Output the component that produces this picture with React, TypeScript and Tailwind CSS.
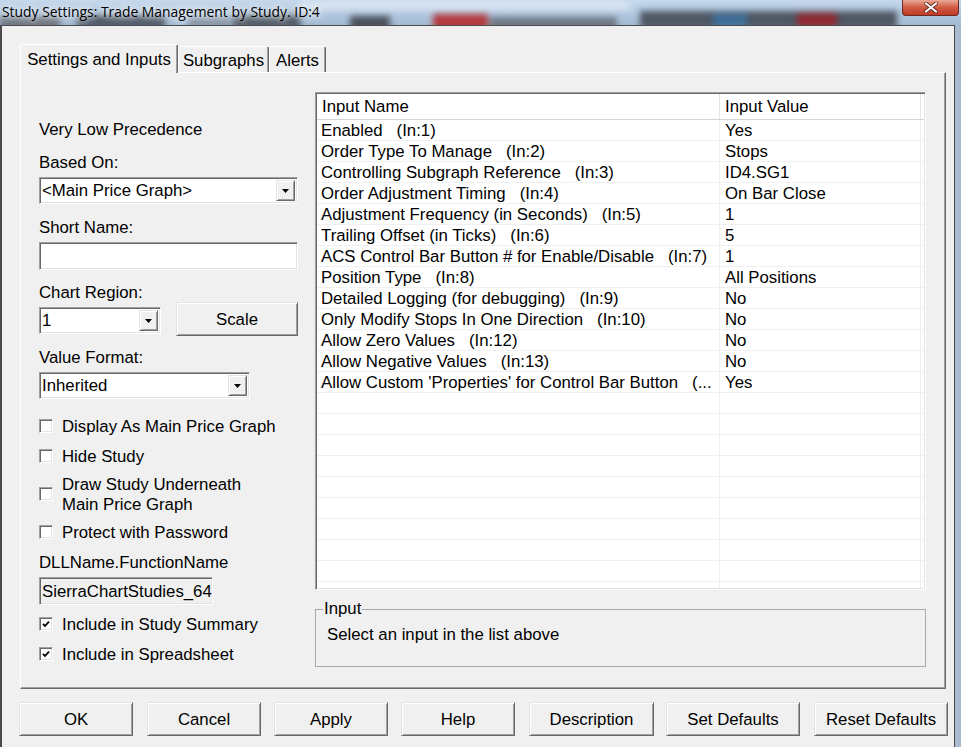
import React from "react";

// classic 3D edges
const raised =
  "border border-t-[#e3e3e3] border-l-[#e3e3e3] border-b-[#696969] border-r-[#696969] shadow-[inset_1px_1px_0_#ffffff,inset_-1px_-1px_0_#a0a0a0]";
const sunken =
  "border border-t-[#a0a0a0] border-l-[#a0a0a0] border-b-white border-r-white shadow-[inset_1px_1px_0_#696969,inset_-1px_-1px_0_#e3e3e3]";

const inputs: [string, string][] = [
  ["Enabled   (In:1)", "Yes"],
  ["Order Type To Manage   (In:2)", "Stops"],
  ["Controlling Subgraph Reference   (In:3)", "ID4.SG1"],
  ["Order Adjustment Timing   (In:4)", "On Bar Close"],
  ["Adjustment Frequency (in Seconds)   (In:5)", "1"],
  ["Trailing Offset (in Ticks)   (In:6)", "5"],
  ["ACS Control Bar Button # for Enable/Disable   (In:7)", "1"],
  ["Position Type   (In:8)", "All Positions"],
  ["Detailed Logging (for debugging)   (In:9)", "No"],
  ["Only Modify Stops In One Direction   (In:10)", "No"],
  ["Allow Zero Values   (In:12)", "No"],
  ["Allow Negative Values   (In:13)", "No"],
  ["Allow Custom 'Properties' for Control Bar Button   (...", "Yes"],
];

const buttons: { label: string; w: string; ml: string }[] = [
  { label: "OK", w: "w-[114px]", ml: "ml-[17px]" },
  { label: "Cancel", w: "w-[114px]", ml: "ml-[14px]" },
  { label: "Apply", w: "w-[114px]", ml: "ml-[13px]" },
  { label: "Help", w: "w-[114px]", ml: "ml-[13px]" },
  { label: "Description", w: "w-[125px]", ml: "ml-[14px]" },
  { label: "Set Defaults", w: "w-[134px]", ml: "ml-[12px]" },
  { label: "Reset Defaults", w: "w-[134px]", ml: "ml-[14px]" },
];

function Arrow() {
  return (
    <svg width="7" height="4" viewBox="0 0 7 4">
      <path d="M0 0h7L3.5 4z" fill="#000" />
    </svg>
  );
}

function Label({ className = "", children }: { className?: string; children: React.ReactNode }) {
  return <div className={`h-[20px] leading-[22px] ${className}`}>{children}</div>;
}

function Combo({ value, w }: { value: string; w: string }) {
  return (
    <div className={`${w} h-[27px] ${sunken} bg-white flex items-center pl-[2px] pr-[2px]`}>
      <span className="flex-1 whitespace-nowrap leading-[22px]">{value}</span>
      <span className={`w-[19px] h-[21px] ${raised} bg-[#f0f0f0] flex items-center justify-center`}>
        <Arrow />
      </span>
    </div>
  );
}

function Check({ checked, tall, children }: { checked?: boolean; tall?: boolean; children: React.ReactNode }) {
  return (
    <div className={`flex items-center ${tall ? "h-[40px]" : "h-[20px]"}`}>
      <span className={`w-[14px] h-[14px] shrink-0 ${sunken} bg-white flex items-center justify-center`}>
        {checked && (
          <svg width="10" height="10" viewBox="0 0 10 10">
            <path d="M2 4.8 L4 7 L8 2.6" stroke="#000" strokeWidth="1.8" fill="none" />
          </svg>
        )}
      </span>
      <span className="ml-[9px] pt-[2px]">{children}</span>
    </div>
  );
}

export default function App() {
  return (
    <div className="w-[961px] h-[747px] overflow-hidden bg-[#a9bccf] font-['Liberation_Sans',Arial,sans-serif] text-[16.8px] leading-[20px] text-black">
      {/* ===== Aero title bar ===== */}
      <div className="relative h-[25px] flex items-start overflow-hidden bg-gradient-to-b from-[#c6d8ec] via-[#b3c9e0] to-[#a3bad3]">
        <div className="absolute inset-0 blur-[3px]">
          <div className="absolute left-[0px] top-[16px] w-[60px] h-[14px] bg-[#6e7682]" />
          <div className="absolute left-[77px] top-[15px] w-[88px] h-[14px] bg-[#4f5966]" />
          <div className="absolute left-[188px] top-[17px] w-[42px] h-[12px] bg-[#8a97a6]" />
          <div className="absolute left-[233px] top-[15px] w-[68px] h-[14px] bg-[#505a66]" />
          <div className="absolute left-[350px] top-[16px] w-[40px] h-[14px] bg-[#4a525c]" />
          <div className="absolute left-[433px] top-[14px] w-[55px] h-[16px] bg-[#b23a3e]" />
          <div className="absolute left-[490px] top-[17px] w-[127px] h-[14px] bg-[#6f7986]" />
          <div className="absolute left-[640px] top-[11px] w-[257px] h-[18px] bg-[#4e5764]" />
          <div className="absolute left-[713px] top-[14px] w-[34px] h-[14px] bg-[#3f6f99]" />
          <div className="absolute left-[797px] top-[13px] w-[40px] h-[16px] bg-[#8e2a33]" />
          <div className="absolute left-[300px] top-[0px] w-[330px] h-[10px] bg-[#d7e3f0]" />
        </div>
        <div className="relative pl-[2px] pt-[3px] font-['Open_Sans',sans-serif] text-[13.9px] leading-[18px] [text-shadow:0_0_6px_#fff,0_0_10px_#fff]">
          Study Settings: Trade Management by Study. ID:4
        </div>
        <div className="relative ml-auto mr-[2px] w-[57px] h-[16px] rounded-b-[4px] border border-t-0 border-[#6b2a22] bg-gradient-to-b from-[#e9a896] via-[#d05a42] to-[#c03a25] flex items-center justify-center">
          <svg width="14" height="11" viewBox="0 0 14 11">
            <path d="M2 1.5 L12 9.5 M12 1.5 L2 9.5" stroke="#5a2018" strokeWidth="3.6" strokeLinecap="round" />
            <path d="M2 1.5 L12 9.5 M12 1.5 L2 9.5" stroke="#ffffff" strokeWidth="2.2" strokeLinecap="round" />
          </svg>
        </div>
      </div>

      {/* ===== Client area ===== */}
      <div className="w-[955px] h-[722px] bg-[#f0f0f0] border-t border-l-2 border-r border-[#4a4a4a]">
        {/* Tabs */}
        <div className="ml-[18px] mt-[18px] h-[28px] flex items-end">
          <div className="relative z-10 -mb-px h-[29px] w-[158px] bg-[#f0f0f0] border-t border-l border-white border-r border-r-[#696969] rounded-t-[2px] shadow-[inset_-1px_0_0_#a0a0a0] text-center pt-[5px]">
            Settings and Inputs
          </div>
          <div className="h-[26px] w-[91px] border-t border-l border-white border-r border-r-[#696969] rounded-t-[2px] shadow-[inset_-1px_0_0_#a0a0a0] text-center pt-[4px]">
            Subgraphs
          </div>
          <div className="h-[26px] w-[57px] border-t border-l border-white border-r border-r-[#696969] rounded-t-[2px] shadow-[inset_-1px_0_0_#a0a0a0] text-center pt-[4px]">
            Alerts
          </div>
        </div>

        {/* Tab pane */}
        <div className="ml-[18px] w-[926px] h-[617px] border border-t-white border-l-white border-b-[#696969] border-r-[#696969] shadow-[inset_-1px_-1px_0_#a0a0a0] flex items-start pt-[19px] pl-[18px]">
          {/* Left column */}
          <div className="w-[259px] flex flex-col items-start">
            <Label className="mt-[27px]">Very Low Precedence</Label>
            <Label className="mt-[13px]">Based On:</Label>
            <div className="mt-[5px]">
              <Combo value="<Main Price Graph>" w="w-[259px]" />
            </div>
            <Label className="mt-[13px]">Short Name:</Label>
            <div className={`mt-[5px] w-[259px] h-[28px] ${sunken} bg-white`} />
            <Label className="mt-[12px]">Chart Region:</Label>
            <div className="h-[34px] w-[259px] flex items-start">
              <div className="mt-[5px]">
                <Combo value="1" w="w-[122px]" />
              </div>
              <div className={`ml-auto w-[122px] h-[34px] ${raised} bg-[#f0f0f0] flex items-center justify-center pt-[2px]`}>
                Scale
              </div>
            </div>
            <Label className="mt-[11px]">Value Format:</Label>
            <div className="mt-[5px]">
              <Combo value="Inherited" w="w-[211px]" />
            </div>
            <div className="mt-[17px]">
              <Check>Display As Main Price Graph</Check>
            </div>
            <div className="mt-[10px]">
              <Check>Hide Study</Check>
            </div>
            <div className="mt-[8px]">
              <Check tall>
                Draw Study Underneath
                <br />
                Main Price Graph
              </Check>
            </div>
            <div className="mt-[8px]">
              <Check>Protect with Password</Check>
            </div>
            <Label className="mt-[10px]">DLLName.FunctionName</Label>
            <div className={`mt-[5px] w-[174px] h-[28px] ${sunken} bg-[#f0f0f0] pl-[2px] pt-[2px] flex items-center overflow-hidden whitespace-nowrap`}>
              SierraChartStudies_64
            </div>
            <div className="mt-[9px]">
              <Check checked>Include in Study Summary</Check>
            </div>
            <div className="mt-[10px]">
              <Check checked>Include in Spreadsheet</Check>
            </div>
          </div>

          {/* Right column */}
          <div className="ml-[17px] w-[611px] flex flex-col">
            <div className={`h-[498px] ${sunken} bg-white p-px flex flex-col overflow-hidden`}>
              <div className="flex h-[26px] shrink-0 border-b border-[#d5d5d5] bg-white">
                <div className="w-[403px] border-r border-[#e5e5e5] pl-[5px] pt-px flex items-center">Input Name</div>
                <div className="w-[201px] border-r border-[#e5e5e5] pl-[5px] pt-px flex items-center">Input Value</div>
                <div className="flex-1" />
              </div>
              <div className="flex-1 overflow-hidden">
                {Array.from({ length: 24 }).map((_, i) => {
                  const row = inputs[i];
                  return (
                    <div key={i} className="flex h-[21px] border-b border-[#f0f0f0]">
                      <div className="w-[403px] border-r border-[#f0f0f0] pl-[4px] pt-px whitespace-pre overflow-hidden">
                        {row ? row[0] : ""}
                      </div>
                      <div className="w-[201px] border-r border-[#f0f0f0] pl-[5px] pt-px whitespace-pre overflow-hidden">
                        {row ? row[1] : ""}
                      </div>
                      <div className="flex-1" />
                    </div>
                  );
                })}
              </div>
            </div>

            <fieldset className="mt-[9px] h-[68px] border border-[#a9a9a9] px-[11px]">
              <legend className="ml-[-4px] px-px leading-[20px]">Input</legend>
              <div className="mt-[6px]">Select an input in the list above</div>
            </fieldset>
          </div>
        </div>

        {/* Bottom buttons */}
        <div className="mt-[13px] flex">
          {buttons.map((b) => (
            <div
              key={b.label}
              className={`${b.ml} ${b.w} h-[34px] ${raised} bg-[#f0f0f0] flex items-center justify-center pt-[2px] whitespace-nowrap`}
            >
              {b.label}
            </div>
          ))}
        </div>
      </div>
    </div>
  );
}
